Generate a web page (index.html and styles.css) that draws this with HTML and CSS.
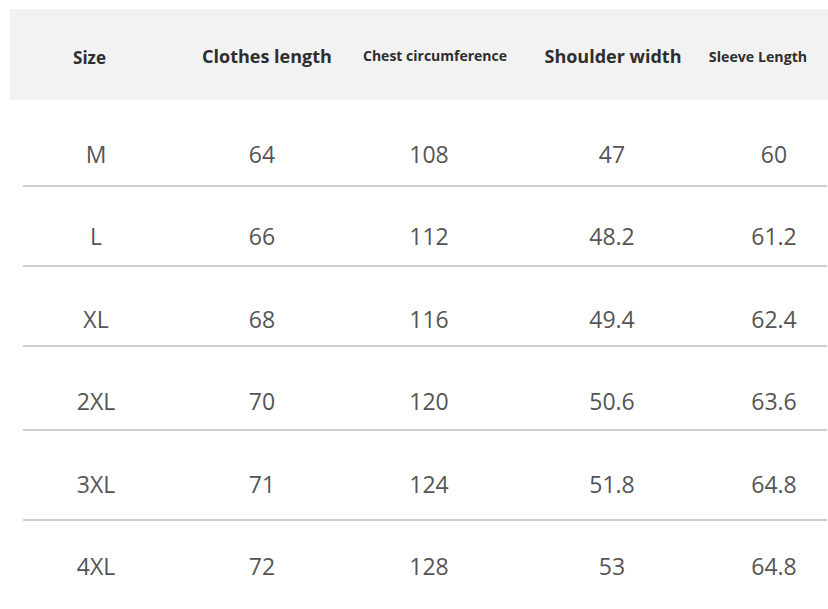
FILE: index.html
```html
<!DOCTYPE html>
<html>
<head>
<meta charset="utf-8">
<link rel="stylesheet" href="styles.css">
</head>
<body>
<div class="page">
  <div class="head">
    <div class="hc h-size">Size</div>
    <div class="hc h-big">Clothes length</div>
    <div class="hc h-small">Chest circumference</div>
    <div class="hc h-big">Shoulder width</div>
    <div class="hc h-sleeve">Sleeve Length</div>
  </div>
  <div class="rows">
    <div class="row r1"><div class="c">M</div><div class="c">64</div><div class="c">108</div><div class="c">47</div><div class="c">60</div></div>
    <div class="row r2"><div class="c">L</div><div class="c">66</div><div class="c">112</div><div class="c">48.2</div><div class="c">61.2</div></div>
    <div class="row r3"><div class="c">XL</div><div class="c">68</div><div class="c">116</div><div class="c">49.4</div><div class="c">62.4</div></div>
    <div class="row r4"><div class="c">2XL</div><div class="c">70</div><div class="c">120</div><div class="c">50.6</div><div class="c">63.6</div></div>
    <div class="row r5"><div class="c">3XL</div><div class="c">71</div><div class="c">124</div><div class="c">51.8</div><div class="c">64.8</div></div>
    <div class="row r6"><div class="c">4XL</div><div class="c">72</div><div class="c">128</div><div class="c">53</div><div class="c">64.8</div></div>
  </div>
</div>
</body>
</html>
```

FILE: styles.css
```css
html, body {
  margin: 0;
  padding: 0;
  background: #ffffff;
}
body {
  width: 828px;
  height: 609px;
  overflow: hidden;
  font-family: "Open Sans", "Noto Sans", sans-serif;
}
.page {
  padding-top: 9px;
}
.head {
  margin-left: 10px;
  height: 91px;
  background: #f2f2f2;
  display: grid;
  grid-template-columns: 159px 196px 140px 216px 74px 1fr;
  align-items: center;
  color: #2e2e2e;
  font-weight: 700;
}
.hc {
  display: flex;
  justify-content: center;
  white-space: nowrap;
  padding-top: 2px;
}
.h-size {
  font-size: 17px;
  padding-top: 5px;
}
.h-big {
  font-size: 18px;
}
.h-small {
  font-size: 14px;
}
.h-sleeve {
  font-size: 14.2px;
  padding-top: 4px;
}
.rows {
  margin-left: 23px;
  width: 804px;
}
.row {
  display: grid;
  grid-template-columns: 146px 186px 148px 218px 106px;
  align-items: start;
  border-bottom: 2px solid #cdcdcd;
  color: #555555;
  font-size: 23px;
  line-height: 30px;
}
.c {
  text-align: center;
  white-space: nowrap;
}
.r1 { height: 85px; }
.r1 .c { padding-top: 39px; }
.r2 { height: 78px; }
.r2 .c { padding-top: 34px; }
.r3 { height: 78px; }
.r3 .c { padding-top: 37px; }
.r4 { height: 82px; }
.r4 .c { padding-top: 39px; }
.r5 { height: 88px; }
.r5 .c { padding-top: 38px; }
.r6 { height: 88px; border-bottom: none; }
.r6 .c { padding-top: 30px; }
```
